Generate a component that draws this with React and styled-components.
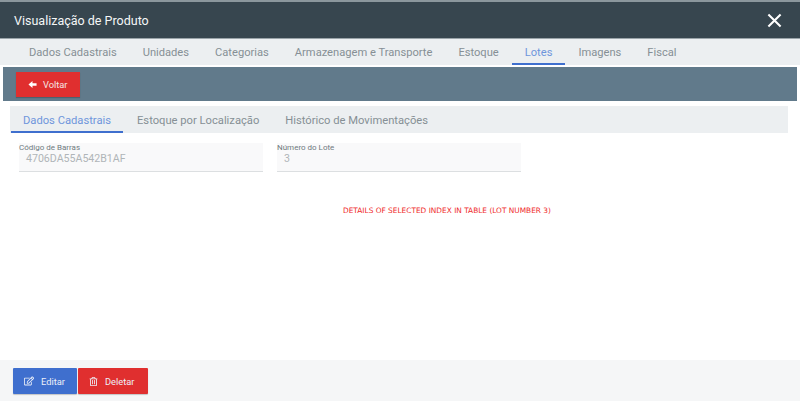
import React from 'react';
import styled, { createGlobalStyle } from 'styled-components';
import { FaArrowLeft, FaRegEdit, FaRegTrashAlt } from 'react-icons/fa';

const GlobalStyle = createGlobalStyle`
  html, body {
    margin: 0;
    padding: 0;
    background: #ffffff;
    font-family: Roboto, "Liberation Sans", sans-serif;
  }
`;

const mainTabs = ['Dados Cadastrais', 'Unidades', 'Categorias', 'Armazenagem e Transporte', 'Estoque', 'Lotes', 'Imagens', 'Fiscal'];
const subTabs = ['Dados Cadastrais', 'Estoque por Localização', 'Histórico de Movimentações'];

const App = () => (
  <Page>
    <GlobalStyle />
    <Header>
      <Title>Visualização de Produto</Title>
      <CloseIcon viewBox="0 0 16 16">
        <path d="M1.5 1.5 L14.5 14.5 M14.5 1.5 L1.5 14.5" />
      </CloseIcon>
    </Header>
    <MainTabs>
      {mainTabs.map((tab) => (
        <MainTab key={tab} $active={tab === 'Lotes'}>{tab}</MainTab>
      ))}
    </MainTabs>
    <Toolbar>
      <BackButton>
        <BackIcon viewBox="0 0 10 10">
          <path d="M0.5 5 L5 1 L5 3.5 L9.5 3.5 L9.5 6.5 L5 6.5 L5 9 Z" />
        </BackIcon>
        Voltar
      </BackButton>
    </Toolbar>
    <SubTabs>
      {subTabs.map((tab, i) => (
        <SubTab key={tab} $active={i === 0}>{tab}</SubTab>
      ))}
    </SubTabs>
    <Fields>
      <Field>
        <FieldLabel>Código de Barras</FieldLabel>
        <FieldValue>4706DA55A542B1AF</FieldValue>
      </Field>
      <Field>
        <FieldLabel>Número do Lote</FieldLabel>
        <FieldValue>3</FieldValue>
      </Field>
    </Fields>
    <Details>DETAILS OF SELECTED INDEX IN TABLE (LOT NUMBER 3)</Details>
    <Footer>
      <ActionButton $color="#3f6fce" $width={64}>
        <FaRegEdit size={10} />
        Editar
      </ActionButton>
      <ActionButton $color="#e02f2f" $width={70}>
        <FaRegTrashAlt size={9} />
        Deletar
      </ActionButton>
    </Footer>
  </Page>
);

export default App;

const Page = styled.div`
  width: 800px;
  height: 401px;
  display: flex;
  flex-direction: column;
  overflow: hidden;
  background: #ffffff;
`;

const Header = styled.div`
  height: 36px;
  border-top: 2px solid #8b979d;
  border-bottom: 1px solid #9aa4a9;
  display: flex;
  align-items: center;
  justify-content: space-between;
  padding: 0 18px 0 14px;
  background: #37464f;
`;

const Title = styled.div`
  color: #f4f6f7;
  font-size: 12.5px;
  line-height: 16px;
  padding-top: 1px;
`;

const CloseIcon = styled.svg`
  width: 15px;
  height: 15px;
  stroke: #ffffff;
  stroke-width: 2.2;
  fill: none;
`;

const MainTabs = styled.div`
  height: 26px;
  display: flex;
  padding-left: 16px;
  background: #eceff1;
`;

const MainTab = styled.div`
  height: 100%;
  box-sizing: border-box;
  padding: 6px 13px 0;
  font-size: 11.15px;
  line-height: 15px;
  color: ${(props) => (props.$active ? '#6f96dc' : '#868f95')};
  border-bottom: 2px solid ${(props) => (props.$active ? '#3f6fce' : 'transparent')};
`;

const Toolbar = styled.div`
  height: 34px;
  margin: 2px 3px 0;
  display: flex;
  align-items: center;
  padding-left: 13px;
  background: #617a8b;
`;

const BackButton = styled.div`
  width: 64px;
  height: 25px;
  box-sizing: border-box;
  display: flex;
  align-items: center;
  gap: 6px;
  padding-left: 12px;
  background: #e02f2f;
  color: #f5e3e3;
  font-size: 9.3px;
  box-shadow: 0 1px 1px rgba(0, 0, 0, 0.2);
`;

const BackIcon = styled.svg`
  width: 9px;
  height: 9px;
  fill: #ffffff;
`;

const SubTabs = styled.div`
  height: 27px;
  display: flex;
  margin: 5px 12px 0 10px;
  padding-left: 1px;
  background: #eceff1;
`;

const SubTab = styled.div`
  height: 100%;
  box-sizing: border-box;
  padding: 7px 12px 0;
  margin-right: 2px;
  font-size: 11.2px;
  line-height: 15px;
  color: ${(props) => (props.$active ? '#6f96dc' : '#868f95')};
  border-bottom: 2px solid ${(props) => (props.$active ? '#3f6fce' : 'transparent')};
`;

const Fields = styled.div`
  display: flex;
  gap: 14px;
  margin: 10px 0 0 19px;
`;

const Field = styled.div`
  width: 244px;
  height: 29px;
  box-sizing: border-box;
  background: #f9f9fa;
  border-bottom: 1px solid #dcdfe1;
`;

const FieldLabel = styled.div`
  font-size: 8px;
  line-height: 10px;
  color: #6f7a80;
`;

const FieldValue = styled.div`
  font-size: 10.6px;
  line-height: 12px;
  padding-left: 7px;
  color: #b0b5b8;
`;

const Details = styled.div`
  margin: 34px 0 0 343px;
  font-family: "DejaVu Sans", sans-serif;
  font-size: 7.4px;
  line-height: 10px;
  white-space: nowrap;
  color: #ef2b2b;
`;

const Footer = styled.div`
  margin-top: auto;
  height: 41px;
  box-sizing: border-box;
  display: flex;
  gap: 1px;
  padding: 8px 0 0 13px;
  background: #f5f6f7;
`;

const ActionButton = styled.div`
  width: ${(props) => props.$width}px;
  height: 26px;
  box-sizing: border-box;
  display: flex;
  align-items: center;
  gap: 7px;
  padding-left: 11px;
  background: ${(props) => props.$color};
  color: #ecf0f8;
  font-size: 9.3px;
  border-radius: 1px;
  box-shadow: 0 1px 1px rgba(0, 0, 0, 0.2);
`;
